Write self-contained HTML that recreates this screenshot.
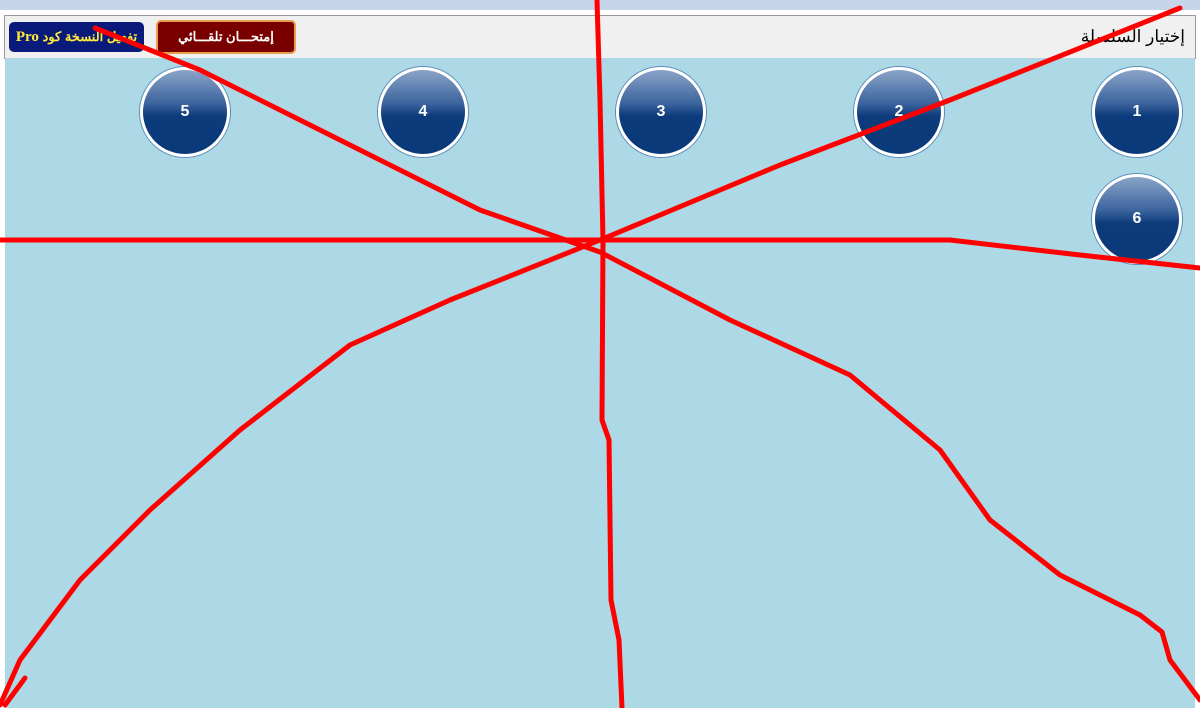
<!DOCTYPE html>
<html><head><meta charset="utf-8"><style>
body{margin:0;width:1200px;height:708px;overflow:hidden;background:#fff;position:relative;font-family:"Liberation Sans","Noto Sans CJK SC",sans-serif}
.top{position:absolute;left:0;top:0;width:1200px;height:10px;background:#c6d5ea}
.hdr{position:absolute;left:4px;top:15px;width:1190px;height:42px;background:#f0f0f0;border:1px solid #999}
.title{position:absolute;right:10px;top:11px;font-size:17px;color:#000;direction:rtl}
.b1{position:absolute;left:4px;top:6px;width:135px;height:30px;background:#0a1a7a;border-radius:5px;color:#ffeb3b;font-weight:bold;font-size:13px;text-align:center;line-height:30px;white-space:nowrap;direction:rtl;overflow:hidden}
.b2{position:absolute;left:151px;top:4px;width:136px;height:30px;background:#7a0000;border:2px solid #e8a050;border-radius:5px;color:#fff;font-weight:bold;font-size:13px;text-align:center;line-height:30px;direction:rtl}
.main{position:absolute;left:5px;top:58px;width:1190px;height:650px;background:#add8e6}
.c{position:absolute;width:84px;height:84px;border-radius:50%;border:3px solid #fff;box-shadow:0 0 0 1px #5a8ab8;background:linear-gradient(#8aa4c8 0%,#3b639d 40%,#0c3b7c 55%,#0a3a7a 100%);color:#fff;font-weight:bold;font-size:16px;text-align:center;line-height:84px}
svg{position:absolute;left:0;top:0}
</style></head><body>
<div class="top"></div>
<div class="hdr"><div class="title">إختيار السلسلة</div>
<div class="b1">تفعيل النسخة كود <span style="font-family:'Liberation Serif',serif;font-size:15px">Pro</span></div>
<div class="b2">إمتحـــان تلقـــائي</div></div>
<div class="main"></div>
<div class="c" style="left:140px;top:67px">5</div>
<div class="c" style="left:378px;top:67px">4</div>
<div class="c" style="left:616px;top:67px">3</div>
<div class="c" style="left:854px;top:67px">2</div>
<div class="c" style="left:1092px;top:67px">1</div>
<div class="c" style="left:1092px;top:174px">6</div>
<svg width="1200" height="708" fill="none" stroke="#f00" stroke-width="5" stroke-linejoin="round" stroke-linecap="round">
<polyline points="597,0 600,100 603,240 602,420 609,440 611,600 619,640 622,708"/>
<polyline points="0,240 600,240 950,240 1080,255 1200,268"/>
<polyline points="1180,8 950,100 780,165 600,240 450,300 350,345 240,430 150,510 80,580 20,660 0,705"/>
<polyline points="25,678 5,705"/>
<polyline points="95,28 200,70 340,140 480,210 600,252 730,320 850,375 940,450 990,520 1060,575 1140,615 1162,632 1170,660 1200,700"/>
</svg>
</body></html>
